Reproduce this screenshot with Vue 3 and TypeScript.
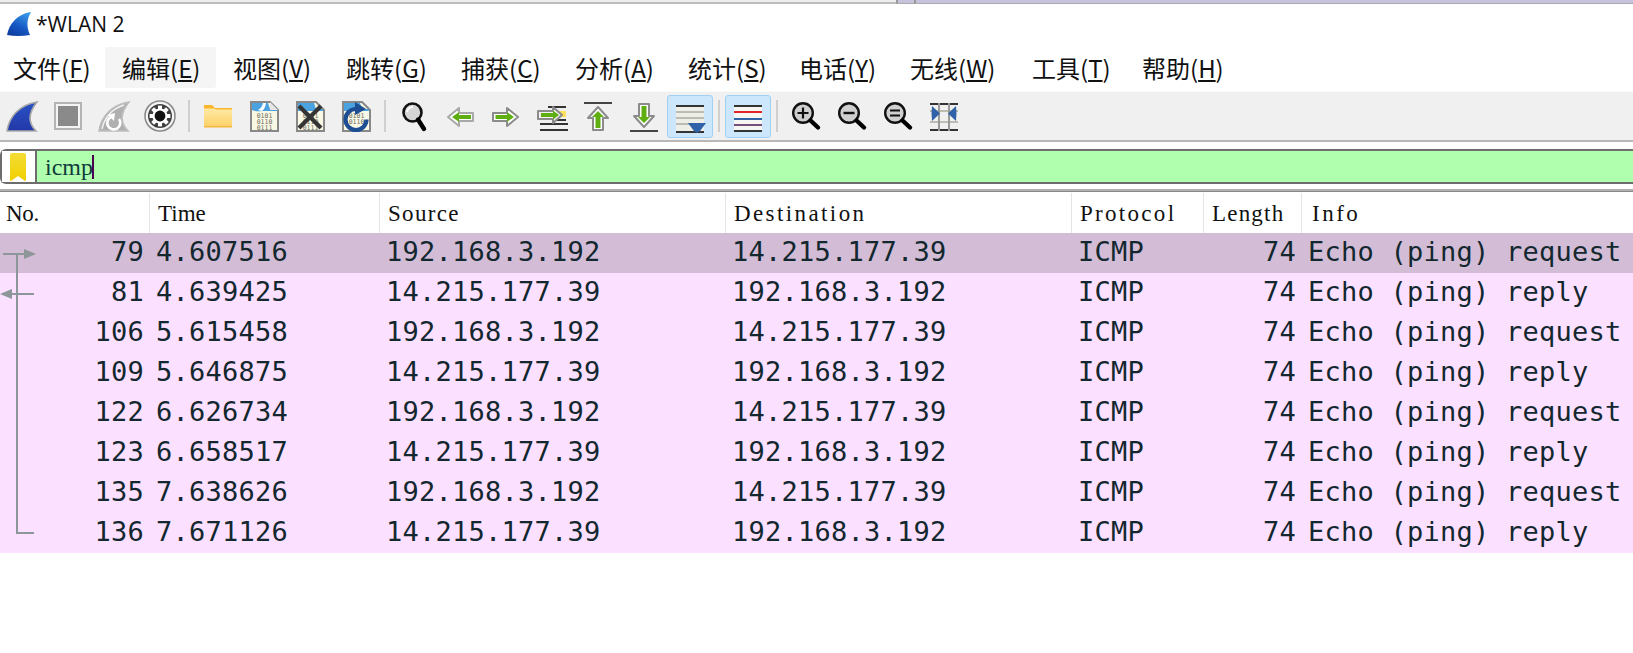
<script setup lang="ts">
interface Packet { no: number; time: string; src: string; dst: string; info: string }
const a = '192.168.3.192'
const b = '14.215.177.39'
const req = 'Echo (ping) request'
const rep = 'Echo (ping) reply'
const packets: Packet[] = [
  { no: 79, time: '4.607516', src: a, dst: b, info: req },
  { no: 81, time: '4.639425', src: b, dst: a, info: rep },
  { no: 106, time: '5.615458', src: a, dst: b, info: req },
  { no: 109, time: '5.646875', src: b, dst: a, info: rep },
  { no: 122, time: '6.626734', src: a, dst: b, info: req },
  { no: 123, time: '6.658517', src: b, dst: a, info: rep },
  { no: 135, time: '7.638626', src: a, dst: b, info: req },
  { no: 136, time: '7.671126', src: b, dst: a, info: rep },
]
const menus: { label: string; key: string; width: number }[] = [
  { label: '文件', key: 'F', width: 105 }, { label: '编辑', key: 'E', width: 111 },
  { label: '视图', key: 'V', width: 113 }, { label: '跳转', key: 'G', width: 115 },
  { label: '捕获', key: 'C', width: 114 }, { label: '分析', key: 'A', width: 113 },
  { label: '统计', key: 'S', width: 111 }, { label: '电话', key: 'Y', width: 111 },
  { label: '无线', key: 'W', width: 122 }, { label: '工具', key: 'T', width: 110 },
  { label: '帮助', key: 'H', width: 110 },
]
const headers = [
  { t: 'No.', c: 'h-no' }, { t: 'Time', c: 'h-time' }, { t: 'Source', c: 'h-src' },
  { t: 'Destination', c: 'h-dst' }, { t: 'Protocol', c: 'h-proto' }, { t: 'Length', c: 'h-len' },
  { t: 'Info', c: 'h-info' },
]
const gearTeeth = [0, 45, 90, 135, 180, 225, 270, 315]
</script>

<template>
  <div class="win">
    <div class="topstrip"><div class="strip-a"></div><div class="strip-c"></div><div class="strip-b"></div></div>
    <div class="titlebar">
      <svg class="appicon" width="26" height="26" viewBox="0 0 26 26">
        <defs><linearGradient id="tg" x1="0.8" y1="0" x2="0.3" y2="1"><stop offset="0" stop-color="#3a9be8"/><stop offset="0.6" stop-color="#1658c4"/><stop offset="1" stop-color="#0d3fa0"/></linearGradient></defs>
        <path d="M1 24 C3 13 11 3 25 1 C21 8 20 15 24 24 Q12 26 1 24Z" fill="url(#tg)"/>
      </svg>
      <span class="title">*WLAN 2</span>
    </div>
    <div class="menubar">
      <div v-for="(m, i) in menus" :key="m.key" class="menu" :class="{ hover: i === 1 }" :style="{ width: m.width + 'px' }">{{ m.label }}(<u>{{ m.key }}</u>)</div>
    </div>
    <div class="toolbar">
      <div class="tool"><svg viewBox="0 0 32 32"><defs><linearGradient id="sb" x1="0" y1="0" x2="0" y2="1"><stop offset="0" stop-color="#2b52c4"/><stop offset="1" stop-color="#2238a8"/></linearGradient></defs><path d="M1 31 C3 18 12 5 31 2 C23 12 21 22 30 31Z" fill="url(#sb)" stroke="#a9a9a9" stroke-width="1.6"/></svg></div>
      <div class="tool"><svg viewBox="0 0 32 32"><rect x="3" y="3" width="26" height="26" fill="#f4f4f4" stroke="#b4b4b4" stroke-width="2"/><rect x="6" y="6" width="20" height="20" fill="#8a8a8a"/></svg></div>
      <div class="tool"><svg viewBox="0 0 32 32"><path d="M1 31 C3 18 12 5 31 2 C23 12 21 22 30 31Z" fill="#b0b0b0" stroke="#bdbdbd" stroke-width="1.6"/><path d="M4 29 C6 19 13 9 26 5" fill="none" stroke="#f2f2f2" stroke-width="1.5"/><path d="M13 17 A6.5 6.5 0 1 0 21 19" fill="none" stroke="#fff" stroke-width="2.6"/><path d="M10 15 L17 13 L16 21Z" fill="#fff"/></svg></div>
      <div class="tool"><svg viewBox="0 0 32 32"><circle cx="16" cy="16" r="15" fill="#f4f4f4" stroke="#8b8b8b" stroke-width="1.6"/><circle cx="16" cy="16" r="12" fill="#3f3f3f"/><circle cx="16" cy="16" r="7.600" fill="#fff"/><rect v-for="d in gearTeeth" :key="d" x="14" y="5.600" width="4" height="4" fill="#fff" :transform="`rotate(${d} 16 16)`"/><circle cx="16" cy="16" r="5.400" fill="#111"/></svg></div>
      <div class="sep"></div>
      <div class="tool"><svg viewBox="0 0 32 32"><defs><linearGradient id="fo" x1="0" y1="0" x2="0" y2="1"><stop offset="0" stop-color="#ffe9a6"/><stop offset="1" stop-color="#fcd066"/></linearGradient></defs><path d="M2 6 Q2 5 3 5 H10 L13 8 H30 V12 H2Z" fill="#fbb52b"/><path d="M2 8.500 H12 L14 9.500 H30 V27 H2Z" fill="url(#fo)"/><rect x="2" y="26" width="28" height="1.500" fill="#f5b83c"/></svg></div>
      <div class="tool"><svg viewBox="0 0 32 32"><path d="M3 2 H22 L30 10 V31 H3Z" fill="#f8f8e4" stroke="#888" stroke-width="2"/><path d="M4 3 H20 L22 9 H29 V11 H14 Q9 12 4 10Z" fill="#4aa3e0"/><path d="M10 10 Q14 8 15 3 H18 Q17 9 14 11Z" fill="#fff"/><path d="M22 2 V10 H30Z" fill="#e6e6e6"/><text x="16.500" y="18" class="bin">0101</text><text x="16.500" y="24" class="bin">0110</text><text x="16.500" y="30" class="bin">0111</text></svg></div>
      <div class="tool"><svg viewBox="0 0 32 32"><path d="M3 2 H22 L30 10 V31 H3Z" fill="#f8f8e4" stroke="#888" stroke-width="2"/><path d="M4 3 H20 L22 9 H29 V11 H4Z" fill="#4aa3e0"/><text x="16.500" y="18" class="bin">0101</text><text x="16.500" y="24" class="bin">0110</text><text x="16.500" y="30" class="bin">0111</text><path d="M5 6 L27 28 M27 6 L5 28" stroke="#343434" stroke-width="4.200"/></svg></div>
      <div class="tool"><svg viewBox="0 0 32 32"><path d="M3 2 H22 L30 10 V31 H3Z" fill="#f8f8e4" stroke="#888" stroke-width="2"/><path d="M4 3 H20 L22 9 H29 V11 H4Z" fill="#4aa3e0"/><text x="16.500" y="18" class="bin">0101</text><text x="16.500" y="24" class="bin">0110</text><path d="M16 9 A10.500 10.500 0 1 0 26.500 19.500" fill="none" stroke="#1d4d92" stroke-width="4.200"/><path d="M15 2 L26 9 L15 15Z" fill="#1d4d92"/></svg></div>
      <div class="sep"></div>
      <div class="tool"><svg viewBox="0 0 32 32"><circle cx="14.500" cy="12.500" r="9" fill="#d5d5d5" stroke="#111" stroke-width="2.600"/><path d="M9 12 A6 6 0 0 1 15 7" fill="none" stroke="#fff" stroke-width="2"/><path d="M20 19.500 L26 29" stroke="#000" stroke-width="4.400" stroke-linecap="round"/></svg></div>
      <div class="tool"><svg viewBox="0 0 32 32"><path d="M4 17 L15 8 V13 H29 V21 H15 V26Z" fill="#fff" stroke="#a8a8a8" stroke-width="2" stroke-linejoin="round"/><path d="M8 17 L15 12 V15 H27 V19 H15 V22Z" fill="#5fae12"/></svg></div>
      <div class="tool"><svg viewBox="0 0 32 32"><path d="M28 17 L17 8 V13 H3 V21 H17 V26Z" fill="#fff" stroke="#8b8b8b" stroke-width="2" stroke-linejoin="round"/><path d="M24 17 L17 12 V15 H5.500 V19 H17 V22Z" fill="#5fae12"/></svg></div>
      <div class="tool"><svg viewBox="0 0 32 32"><rect x="12" y="6" width="18" height="2" fill="#333"/><rect x="20" y="11" width="10" height="6" fill="#ffe25c"/><rect x="20" y="19" width="10" height="2" fill="#333"/><rect x="4" y="23" width="28" height="2" fill="#333"/><rect x="4" y="29" width="28" height="2" fill="#333"/><path d="M26 15 L17 7 V11 H2 V19 H17 V23Z" fill="#f2f2f2" stroke="#8b8b8b" stroke-width="2" stroke-linejoin="round"/><path d="M23 15 L17 10.500 V13 H5 V17 H17 V19.500Z" fill="#5fae12"/></svg></div>
      <div class="tool"><svg viewBox="0 0 32 32"><rect x="2" y="2" width="28" height="2" fill="#444"/><path d="M16 7 L26 18 H21 V30 H11 V18 H6Z" fill="#fff" stroke="#8b8b8b" stroke-width="2" stroke-linejoin="round"/><path d="M16 11 L22 17 H18.500 V28 H13.500 V17 H10Z" fill="#5fae12"/></svg></div>
      <div class="tool"><svg viewBox="0 0 32 32"><rect x="2" y="30" width="28" height="2" fill="#444"/><path d="M16 27 L26 16 H21 V4 H11 V16 H6Z" fill="#fff" stroke="#8b8b8b" stroke-width="2" stroke-linejoin="round"/><path d="M16 23 L22 17 H18.500 V6 H13.500 V17 H10Z" fill="#5fae12"/></svg></div>
      <div class="tool on"><svg viewBox="0 0 32 32"><rect x="2" y="5" width="28" height="28" fill="#eeeee8"/><rect x="2" y="5" width="28" height="2" fill="#333"/><rect x="2" y="11" width="28" height="2" fill="#bcbcb2"/><rect x="2" y="17" width="28" height="2" fill="#bcbcb2"/><rect x="2" y="23" width="28" height="2" fill="#bcbcb2"/><rect x="2" y="31" width="28" height="2" fill="#333"/><path d="M14 23 H32 L26 31 Q23 34 20 31Z" fill="#2f62a8"/></svg></div>
      <div class="sep"></div>
      <div class="tool on"><svg viewBox="0 0 32 32"><rect x="2" y="5" width="28" height="27" fill="#f6f6f2"/><rect x="2" y="5" width="28" height="2" fill="#333"/><rect x="2" y="11" width="28" height="2" fill="#e0262c"/><rect x="2" y="18" width="28" height="2" fill="#2f62a8"/><rect x="2" y="24" width="28" height="2" fill="#75507b"/><rect x="2" y="30" width="28" height="2" fill="#333"/></svg></div>
      <div class="sep"></div>
      <div class="tool"><svg viewBox="0 0 32 32"><circle cx="13" cy="13" r="9.800" fill="#cfcfcf" stroke="#111" stroke-width="2.400"/><path d="M7.500 13 H18.500 M13 7.500 V18.500" stroke="#111" stroke-width="2.200"/><path d="M20.500 20.500 L28 27.500" stroke="#000" stroke-width="4.400" stroke-linecap="round"/></svg></div>
      <div class="tool"><svg viewBox="0 0 32 32"><circle cx="13" cy="13" r="9.800" fill="#cfcfcf" stroke="#111" stroke-width="2.400"/><path d="M7.500 13 H18.500" stroke="#111" stroke-width="2.400"/><path d="M20.500 20.500 L28 27.500" stroke="#000" stroke-width="4.400" stroke-linecap="round"/></svg></div>
      <div class="tool"><svg viewBox="0 0 32 32"><circle cx="13" cy="13" r="9.800" fill="#cfcfcf" stroke="#111" stroke-width="2.400"/><path d="M8 10.500 H18 M8 15.500 H18" stroke="#111" stroke-width="2.200"/><path d="M20.500 20.500 L28 27.500" stroke="#000" stroke-width="4.400" stroke-linecap="round"/></svg></div>
      <div class="tool"><svg viewBox="0 0 32 32"><rect x="2" y="3" width="28" height="2" fill="#333"/><rect x="2" y="29" width="28" height="2" fill="#333"/><rect x="2" y="21" width="28" height="2" fill="#bcbcb2"/><rect x="2" y="10" width="28" height="2" fill="#bcbcb2"/><rect x="10" y="3" width="2" height="28" fill="#999"/><rect x="20" y="3" width="2" height="28" fill="#999"/><path d="M4 6 Q3 13 4 21 L12 13.500Z" fill="#2f62a8"/><path d="M28 6 Q29 13 28 21 L20 13.500Z" fill="#2f62a8"/></svg></div>
    </div>
    <div class="filter">
      <div class="bookmark"><svg width="16" height="28" viewBox="0 0 16 28"><defs><linearGradient id="bm" x1="0" y1="0" x2="0" y2="1"><stop offset="0" stop-color="#f4dc34"/><stop offset="1" stop-color="#f0d000"/></linearGradient></defs><path d="M0 2 Q0 0 2 0 H14 Q16 0 16 2 V27 Q16 28 15 28 L8 23 L1 28 Q0 28 0 27Z" fill="url(#bm)"/></svg></div>
      <div class="filter-input"><span class="filter-text">icmp</span><span class="caret"></span></div>
    </div>
    <div class="divider"></div>
    <div class="list">
      <div class="row head">
        <div v-for="h in headers" :key="h.t" class="hcell" :class="h.c">{{ h.t }}</div>
      </div>
      <div v-for="(p, i) in packets" :key="p.no" class="row data" :class="{ sel: i === 0 }">
        <div class="cell right">{{ p.no }}</div>
        <div class="cell">{{ p.time }}</div>
        <div class="cell">{{ p.src }}</div>
        <div class="cell">{{ p.dst }}</div>
        <div class="cell">ICMP</div>
        <div class="cell right">74</div>
        <div class="cell">{{ p.info }}</div>
      </div>
      <svg class="related" width="40" height="320" viewBox="0 0 40 320">
        <g fill="none" stroke="#8d9699" stroke-width="2">
          <path d="M3 21 H26"/>
          <path d="M17 21 V300 H34"/>
          <path d="M12 61 H34"/>
        </g>
        <path d="M24 16 L36 21 L24 26Z" fill="#8d9699"/>
        <path d="M0 61 L12 56 V66Z" fill="#8d9699"/>
      </svg>
    </div>
  </div>
</template>

<style>
html, body { margin: 0; background: #fff; overflow: hidden; }
</style>

<style scoped>
.win { width: 1633px; height: 653px; background: #fff; overflow: hidden; }
.topstrip { display: flex; height: 4px; }
.strip-a { width: 896px; background: #ededed; border-bottom: 2px solid #bdbdbd; box-sizing: border-box; }
.strip-c { width: 18px; background: #c6c4dc; border-left: 2px solid #999; border-bottom: 1px solid #aaa; box-sizing: border-box; }
.strip-b { flex: 1; background: #c6c4dc; border-left: 2px solid #999; border-bottom: 1px solid #aaa; box-sizing: border-box; }
.titlebar { height: 43px; display: flex; align-items: center; padding-left: 6px; padding-bottom: 3px; box-sizing: border-box; }
.appicon { margin-right: 4px; }
.title { font: 21px/1 "Open Sans", "Noto Sans", sans-serif; color: #111; }
.menubar { height: 41px; display: flex; align-items: stretch; font-family: "Noto Sans CJK SC", "Noto Sans", sans-serif; font-size: 24px; color: #111; }
.menu { padding-left: 17px; box-sizing: border-box; flex: none; line-height: 41px; border-radius: 3px; white-space: nowrap; }
.menu:first-child { padding-left: 13px; }
.menu.hover { background: #f5f5f5; }
.toolbar { margin-top: 3px; height: 49px; box-sizing: border-box; background: #f0f0f0; border-top: 1px solid #fafafa; display: flex; align-items: center; position: relative; box-shadow: 0 2px 0 #b8b8b8; }
.tool { width: 46px; height: 43px; flex: none; display: flex; align-items: center; justify-content: center; box-sizing: border-box; border-radius: 3px; }
.tool:first-child { margin-left: -1px; }
.tool svg { width: 32px; height: 32px; display: block; overflow: visible; }
.tool.on { background: #cce6fb; border: 1px solid #9fd0f5; }
.bin { font: 6.5px "DejaVu Sans Mono", monospace; fill: #6d6d62; text-anchor: middle; }
.sep { width: 12px; flex: none; display: flex; justify-content: center; height: 32px; position: relative; }
.sep::before { content: ""; width: 2px; background: #cfcfcf; }
.filter { margin-top: 9px; height: 35px; box-sizing: border-box; border: 2px solid #6d6d6d; border-right: none; border-radius: 6px 0 0 6px; display: flex; background: #afffaf; }
.bookmark { background: #fff; border-right: 2px solid #6d6d6d; display: flex; padding-left: 8px; padding-top: 2px; box-sizing: border-box; flex: none; width: 35px; }
.filter-input { display: flex; align-items: center; padding-left: 8px; }
.filter-text { font: 24px/1 "Liberation Serif", serif; color: #0f3b3b; }
.caret { width: 2px; height: 24px; background: #4b0050; margin-left: -1px; }
.divider { margin-top: 5px; height: 2px; background: #b0b0b0; border-bottom: 1px solid #888; }
.list { margin-top: 1px; position: relative; }
.row { display: grid; grid-template-columns: 150px 230px 346px 346px 132px 98px 1fr; height: 40px; }
.hcell { font: 23px/41px "Liberation Serif", serif; color: #111; border-right: 1px solid #e4e4e4; box-sizing: border-box; padding-left: 8px; white-space: nowrap; overflow: hidden; }
.hcell:first-child { padding-left: 6px; }
.hcell:last-child { border-right: none; padding-left: 10px; }
.h-no { letter-spacing: -0.3px; }
.h-time { letter-spacing: 0; }
.h-src { letter-spacing: 1.3px; }
.h-dst { letter-spacing: 2.4px; }
.h-proto { letter-spacing: 2.3px; }
.h-len { letter-spacing: 1.2px; }
.h-info { letter-spacing: 2.5px; }
.data { background: #fce0ff; }
.data.sel { background: #d3bdd6; }
.cell { font: 27px/38px "DejaVu Sans Mono", monospace; letter-spacing: 0.25px; color: #12272e; padding-left: 6px; white-space: nowrap; }
.cell.right { text-align: right; padding-right: 6px; padding-left: 0; }
.related { position: absolute; left: 0; top: 40px; pointer-events: none; }
</style>
